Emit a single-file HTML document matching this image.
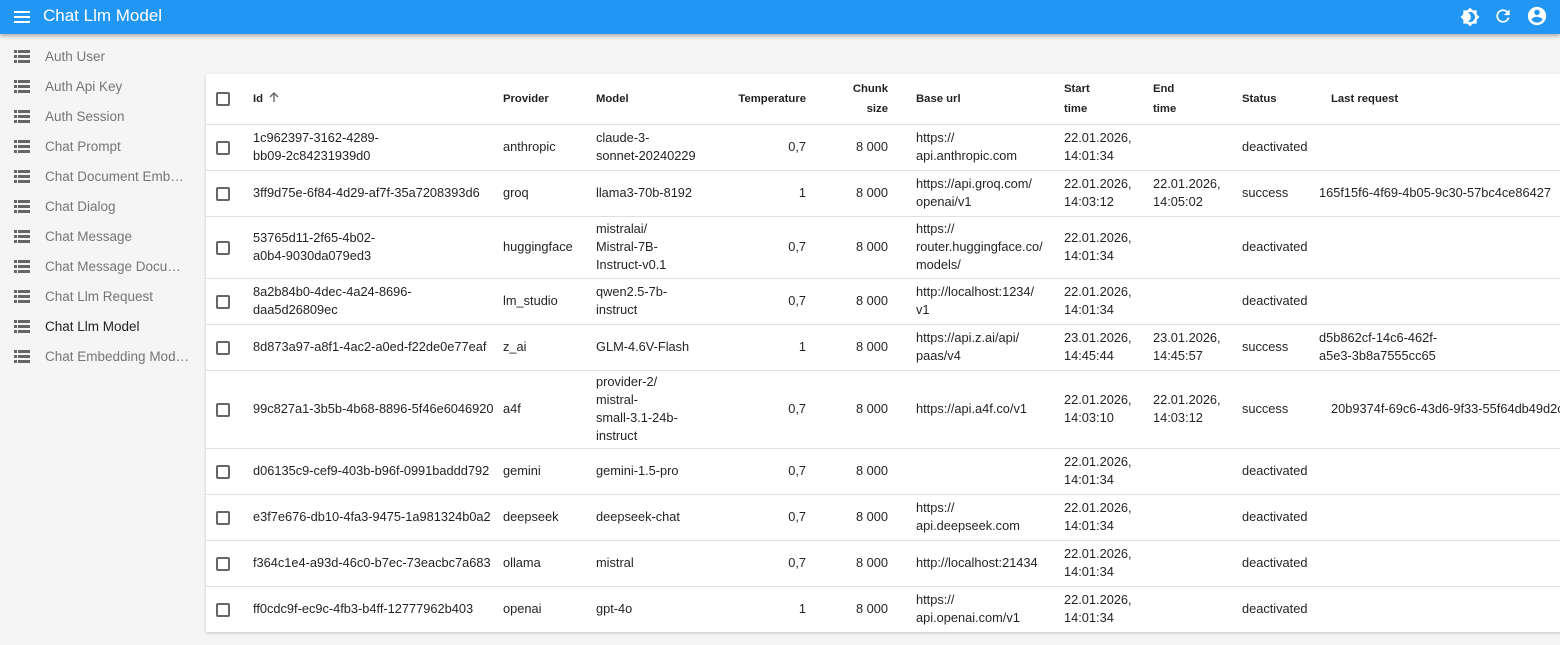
<!DOCTYPE html>
<html><head><meta charset="utf-8"><style>
*{box-sizing:border-box;margin:0;padding:0}
body{width:1560px;height:645px;overflow:hidden;background:#f5f5f5;font-family:"Liberation Sans",sans-serif;color:rgba(0,0,0,.87)}
.bar{position:absolute;left:0;top:0;width:1560px;height:34px;background:#2196f3;box-shadow:0 2px 4px rgba(0,0,0,.3);z-index:2}
.bar .t{position:absolute;left:43px;top:6px;color:#fff;font-size:17px}
.side{position:absolute;left:0;top:42px;width:200px}
.side div{height:30px;line-height:30px;font-size:13.5px;color:#757575;padding-left:45px;position:relative;white-space:nowrap}
.side div.sel{color:rgba(0,0,0,.87)}
.side svg{position:absolute;left:14px;top:8px}
.card{position:absolute;left:206px;top:74px;width:1360px;height:558px;background:#fff;box-shadow:0 1px 3px rgba(0,0,0,.2);overflow:hidden}
table{border-collapse:collapse;table-layout:fixed;font-size:12.8px;width:1354px}
td,th{vertical-align:middle;text-align:left;line-height:18px;border-bottom:1px solid #e0e0e0;padding:0 0 0 12px;white-space:nowrap;overflow:visible}
th{font-weight:bold;line-height:20px;height:50px;font-size:11.3px}
td.r,th.r{text-align:right;padding:0 12px 0 0}
.cb{padding-left:10px}
.cb span{display:inline-block;width:14px;height:14px;border:2px solid #666;border-radius:2px;vertical-align:middle}
td.u{padding-left:16px}
</style></head><body>
<div class="bar">
<svg style="position:absolute;left:13px;top:8px" width="18" height="18" viewBox="0 0 18 18"><path d="M1 4h16M1 9h16M1 14h16" stroke="#fff" stroke-width="2"/></svg>
<div class="t">Chat Llm Model</div>
<svg style="position:absolute;left:1460px;top:7px" width="20" height="20" viewBox="0 0 24 24"><path fill="#fff" d="M20 8.69V4h-4.69L12 .69 8.69 4H4v4.69L.69 12 4 15.31V20h4.69L12 23.31 15.31 20H20v-4.69L23.31 12 20 8.69zM12 18c-.89 0-1.74-.2-2.5-.55C11.56 16.5 13 14.42 13 12s-1.44-4.5-3.5-5.45C10.26 6.2 11.11 6 12 6c3.31 0 6 2.69 6 6s-2.690 6-6 6z"/></svg>
<svg style="position:absolute;left:1493px;top:6px" width="20" height="20" viewBox="0 0 24 24"><path fill="#fff" d="M17.65 6.35A7.96 7.96 0 0 0 12 4a8 8 0 1 0 7.73 10h-2.08A6 6 0 1 1 12 6c1.66 0 3.14.69 4.22 1.78L13 11h7V4l-2.35 2.35z"/></svg>
<svg style="position:absolute;left:1526px;top:5px" width="22" height="22" viewBox="0 0 24 24"><path fill="#fff" d="M12 2a10 10 0 1 0 0 20 10 10 0 0 0 0-20zm0 3a3 3 0 1 1 0 6 3 3 0 0 1 0-6zm0 14.2a7.2 7.2 0 0 1-6-3.22c.03-1.99 4-3.08 6-3.08s5.97 1.09 6 3.08a7.2 7.2 0 0 1-6 3.22z"/></svg>
</div>
<div class="side">
<div><svg width="16" height="14" viewBox="0 0 16 14"><path fill="#666" d="M0 0h3v3H0zM4 0h12v3H4zM0 5h3v3H0zM4 5h12v3H4zM0 10h3v3H0zM4 10h12v3H4z"/></svg>Auth User</div>
<div><svg width="16" height="14" viewBox="0 0 16 14"><path fill="#666" d="M0 0h3v3H0zM4 0h12v3H4zM0 5h3v3H0zM4 5h12v3H4zM0 10h3v3H0zM4 10h12v3H4z"/></svg>Auth Api Key</div>
<div><svg width="16" height="14" viewBox="0 0 16 14"><path fill="#666" d="M0 0h3v3H0zM4 0h12v3H4zM0 5h3v3H0zM4 5h12v3H4zM0 10h3v3H0zM4 10h12v3H4z"/></svg>Auth Session</div>
<div><svg width="16" height="14" viewBox="0 0 16 14"><path fill="#666" d="M0 0h3v3H0zM4 0h12v3H4zM0 5h3v3H0zM4 5h12v3H4zM0 10h3v3H0zM4 10h12v3H4z"/></svg>Chat Prompt</div>
<div><svg width="16" height="14" viewBox="0 0 16 14"><path fill="#666" d="M0 0h3v3H0zM4 0h12v3H4zM0 5h3v3H0zM4 5h12v3H4zM0 10h3v3H0zM4 10h12v3H4z"/></svg>Chat Document Emb…</div>
<div><svg width="16" height="14" viewBox="0 0 16 14"><path fill="#666" d="M0 0h3v3H0zM4 0h12v3H4zM0 5h3v3H0zM4 5h12v3H4zM0 10h3v3H0zM4 10h12v3H4z"/></svg>Chat Dialog</div>
<div><svg width="16" height="14" viewBox="0 0 16 14"><path fill="#666" d="M0 0h3v3H0zM4 0h12v3H4zM0 5h3v3H0zM4 5h12v3H4zM0 10h3v3H0zM4 10h12v3H4z"/></svg>Chat Message</div>
<div><svg width="16" height="14" viewBox="0 0 16 14"><path fill="#666" d="M0 0h3v3H0zM4 0h12v3H4zM0 5h3v3H0zM4 5h12v3H4zM0 10h3v3H0zM4 10h12v3H4z"/></svg>Chat Message Docu…</div>
<div><svg width="16" height="14" viewBox="0 0 16 14"><path fill="#666" d="M0 0h3v3H0zM4 0h12v3H4zM0 5h3v3H0zM4 5h12v3H4zM0 10h3v3H0zM4 10h12v3H4z"/></svg>Chat Llm Request</div>
<div class="sel"><svg width="16" height="14" viewBox="0 0 16 14"><path fill="#666" d="M0 0h3v3H0zM4 0h12v3H4zM0 5h3v3H0zM4 5h12v3H4zM0 10h3v3H0zM4 10h12v3H4z"/></svg>Chat Llm Model</div>
<div><svg width="16" height="14" viewBox="0 0 16 14"><path fill="#666" d="M0 0h3v3H0zM4 0h12v3H4zM0 5h3v3H0zM4 5h12v3H4zM0 10h3v3H0zM4 10h12v3H4z"/></svg>Chat Embedding Mod…</div>
</div>
<div class="card">
<table>
<colgroup><col style="width:35px"><col style="width:250px"><col style="width:93px"><col style="width:122px"><col style="width:112px"><col style="width:82px"><col style="width:152px"><col style="width:89px"><col style="width:89px"><col style="width:89px"><col style="width:241px"></colgroup>
<tr><th class="cb"><span></span></th><th>Id <svg width="12" height="12" viewBox="0 0 12 12" style="vertical-align:-1px;margin-left:2px"><path d="M6 11V2M2 6l4-4 4 4" stroke="#666" stroke-width="1.4" fill="none"/></svg></th><th>Provider</th><th>Model</th><th class="r">Temperature</th><th class="r">Chunk<br>size</th><th class="u" style="padding-left:16px">Base url</th><th>Start<br>time</th><th>End<br>time</th><th>Status</th><th>Last request</th></tr>
<tr style="height:46px"><td class="cb"><span></span></td><td>1c962397-3162-4289-<br>bb09-2c84231939d0</td><td>anthropic</td><td>claude-3-<br>sonnet-20240229</td><td class="r">0,7</td><td class="r">8 000</td><td class="u">https://<br>api.anthropic.com</td><td>22.01.2026,<br>14:01:34</td><td></td><td>deactivated</td><td></td></tr>
<tr style="height:46px"><td class="cb"><span></span></td><td>3ff9d75e-6f84-4d29-af7f-35a7208393d6</td><td>groq</td><td>llama3-70b-8192</td><td class="r">1</td><td class="r">8 000</td><td class="u">https://api.groq.com/<br>openai/v1</td><td>22.01.2026,<br>14:03:12</td><td>22.01.2026,<br>14:05:02</td><td>success</td><td style="padding-left:0">165f15f6-4f69-4b05-9c30-57bc4ce86427</td></tr>
<tr style="height:62px"><td class="cb"><span></span></td><td>53765d11-2f65-4b02-<br>a0b4-9030da079ed3</td><td>huggingface</td><td>mistralai/<br>Mistral-7B-<br>Instruct-v0.1</td><td class="r">0,7</td><td class="r">8 000</td><td class="u">https://<br>router.huggingface.co/<br>models/</td><td>22.01.2026,<br>14:01:34</td><td></td><td>deactivated</td><td></td></tr>
<tr style="height:46px"><td class="cb"><span></span></td><td>8a2b84b0-4dec-4a24-8696-<br>daa5d26809ec</td><td>lm_studio</td><td>qwen2.5-7b-<br>instruct</td><td class="r">0,7</td><td class="r">8 000</td><td class="u">http://localhost:1234/<br>v1</td><td>22.01.2026,<br>14:01:34</td><td></td><td>deactivated</td><td></td></tr>
<tr style="height:46px"><td class="cb"><span></span></td><td>8d873a97-a8f1-4ac2-a0ed-f22de0e77eaf</td><td>z_ai</td><td>GLM-4.6V-Flash</td><td class="r">1</td><td class="r">8 000</td><td class="u">https://api.z.ai/api/<br>paas/v4</td><td>23.01.2026,<br>14:45:44</td><td>23.01.2026,<br>14:45:57</td><td>success</td><td style="padding-left:0">d5b862cf-14c6-462f-<br>a5e3-3b8a7555cc65</td></tr>
<tr style="height:78px"><td class="cb"><span></span></td><td>99c827a1-3b5b-4b68-8896-5f46e6046920</td><td>a4f</td><td>provider-2/<br>mistral-<br>small-3.1-24b-<br>instruct</td><td class="r">0,7</td><td class="r">8 000</td><td class="u">https://api.a4f.co/v1</td><td>22.01.2026,<br>14:03:10</td><td>22.01.2026,<br>14:03:12</td><td>success</td><td>20b9374f-69c6-43d6-9f33-55f64db49d2c</td></tr>
<tr style="height:46px"><td class="cb"><span></span></td><td>d06135c9-cef9-403b-b96f-0991baddd792</td><td>gemini</td><td>gemini-1.5-pro</td><td class="r">0,7</td><td class="r">8 000</td><td class="u"></td><td>22.01.2026,<br>14:01:34</td><td></td><td>deactivated</td><td></td></tr>
<tr style="height:46px"><td class="cb"><span></span></td><td>e3f7e676-db10-4fa3-9475-1a981324b0a2</td><td>deepseek</td><td>deepseek-chat</td><td class="r">0,7</td><td class="r">8 000</td><td class="u">https://<br>api.deepseek.com</td><td>22.01.2026,<br>14:01:34</td><td></td><td>deactivated</td><td></td></tr>
<tr style="height:46px"><td class="cb"><span></span></td><td>f364c1e4-a93d-46c0-b7ec-73eacbc7a683</td><td>ollama</td><td>mistral</td><td class="r">0,7</td><td class="r">8 000</td><td class="u">http://localhost:21434</td><td>22.01.2026,<br>14:01:34</td><td></td><td>deactivated</td><td></td></tr>
<tr style="height:46px"><td class="cb"><span></span></td><td>ff0cdc9f-ec9c-4fb3-b4ff-12777962b403</td><td>openai</td><td>gpt-4o</td><td class="r">1</td><td class="r">8 000</td><td class="u">https://<br>api.openai.com/v1</td><td>22.01.2026,<br>14:01:34</td><td></td><td>deactivated</td><td></td></tr>
</table>
</div>
</body></html>
